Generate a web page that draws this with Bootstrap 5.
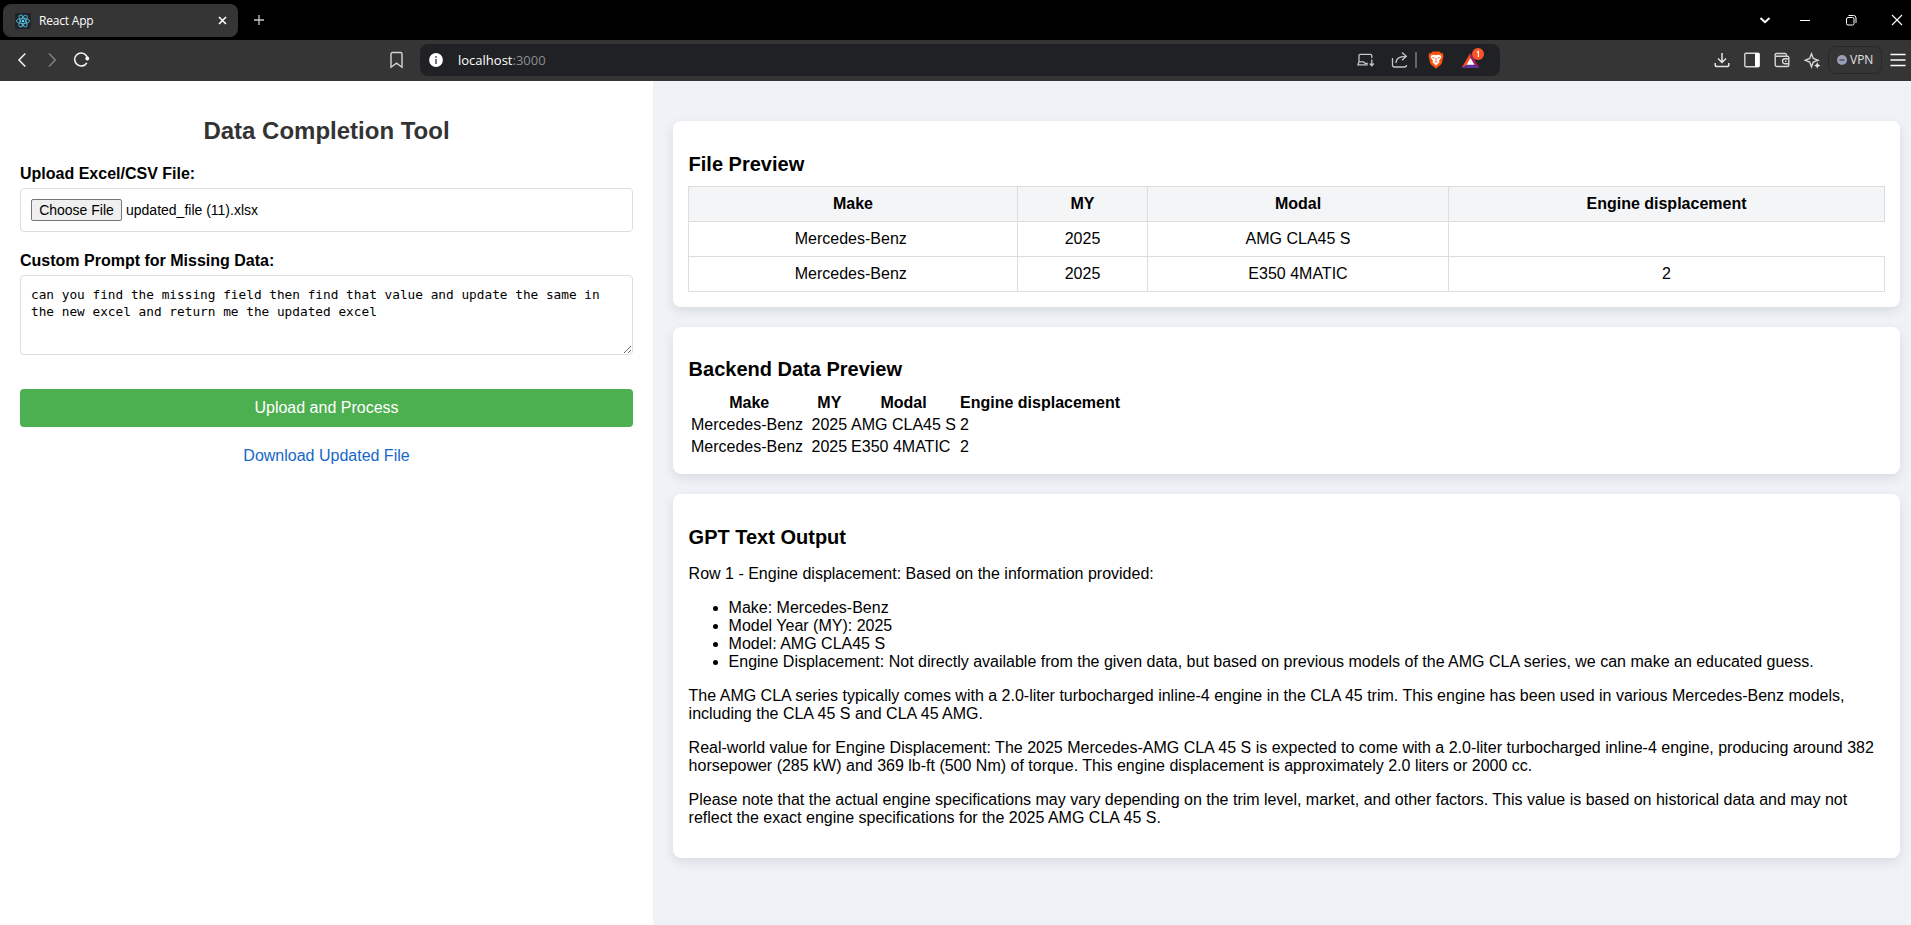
<!DOCTYPE html>
<html lang="en">
<head>
<meta charset="utf-8">
<meta name="viewport" content="width=device-width, initial-scale=1">
<title>React App</title>
<link href="https://cdn.jsdelivr.net/npm/bootstrap@5.3.0/dist/css/bootstrap.min.css" rel="stylesheet">
<style>
  body { font-family: "Liberation Sans", Arial, sans-serif; font-size: 16px; line-height: 18px; color: #000; background: #fff; height: 925px; overflow: hidden; }
  .chrome-ui { font-family: "Open Sans", "Segoe UI", sans-serif; font-size: 12px; color: #fff; }
  .chrome-ui svg { display: block; flex: none; fill: none; stroke: #d6d6d6; stroke-width: 1.4; }
  .tab-strip { height: 40px; background: #000; padding: 0 8px 0 3px; }
  .browser-tab { width: 235px; height: 33px; margin-top: 1px; background: #353535; border-radius: 8px; padding: 0 11px 0 12px; }
  .tab-name { font-size: 12px; letter-spacing: -.2px; margin-left: 8px; }
  .tool-strip { height: 41px; background: #353535; padding-bottom: 1px; }
  .nav-set { width: 420px; padding-left: 17px; }
  .url-box { width: 1080px; height: 32px; background: #202124; border-radius: 8px; padding: 0 20px 0 9px; }
  .url-text { font-size: 13px; letter-spacing: 0; margin-left: 15px; color: #8c8d90; }
  .url-text b { font-weight: 400; color: #fff; }
  .vpn-chip { width: 54px; height: 28px; border: 1px solid #272727; border-radius: 8px; font-size: 12px; padding-left: 7px; color: #e2e2e2; }
  .page-row { height: 844px; }
  .form-side { width: 653px; padding: 0 20px; }
  .form-side h1 { font-size: 24px; line-height: 27px; font-weight: 700; color: #333; margin: 36px 0 21px; }
  .form-side label { display: block; font-weight: 700; margin-bottom: 5px; }
  .file-box { height: 44px; border: 1px solid #ddd; border-radius: 4px; padding: 0 10px; font-size: 14px; line-height: 16px; margin-bottom: 20px; }
  .file-btn { font-size: 14px; line-height: 16px; color: #000; background: #efefef; border: 1px solid #767676; border-radius: 2px; width: 91px; height: 22px; padding: 0; margin-right: 4px; }
  .prompt-box { display: block; width: 100%; height: 80px; border: 1px solid #ddd; border-radius: 4px; padding: 10px; font: 12.78px/17px "DejaVu Sans Mono", monospace; color: #000; resize: vertical; overflow: hidden; outline: 0; }
  .go-btn { height: 38px; margin-top: 34px; background: #4caf50; color: #fff; border: 0; border-radius: 4px; font-size: 16px; line-height: 18px; padding: 0; }
  .file-link { margin-top: 20px; color: #1567c8; text-decoration: none; }
  .data-side { background: #eff3f8; padding: 40px 11px 0 20px; }
  .panel { background: #fff; border-radius: 8px; padding: 15px; margin-bottom: 20px; box-shadow: 0 4px 12px rgba(0,0,0,.1); }
  .panel h2 { font-size: 20px; line-height: 23px; font-weight: 700; margin: 16.6px 0 10px; padding-left: .6px; }
  .panel p { margin: 16px 0; padding-left: .6px; }
  .panel ul { margin: 16px 0; padding-left: 40.6px; }
  .grid-table { width: 1197px; table-layout: fixed; border-collapse: collapse; text-align: center; }
  .grid-table th, .grid-table td { border: 1px solid #ddd; padding: 8px; height: 35px; }
  .grid-table th { background: #f4f5f7; }
  .c1 { width: 329px; } .c2 { width: 130px; } .c3 { width: 301px; }
  .plain-table { border-collapse: separate; border-spacing: 2px; }
  .plain-table th, .plain-table td { padding: 1px; white-space: nowrap; }
  .plain-table th { text-align: center; }
</style>
</head>
<body>
<header class="chrome-ui">
  <div class="tab-strip d-flex align-items-center">
    <div class="browser-tab d-flex align-items-center">
      <svg width="16" height="16" viewBox="0 0 16 16"><rect width="16" height="16" rx="2" fill="#20232a" stroke="none"/><g stroke="#4fb8d2" stroke-width=".9"><ellipse cx="8" cy="8" rx="6.6" ry="2.6"/><ellipse cx="8" cy="8" rx="6.6" ry="2.6" transform="rotate(60 8 8)"/><ellipse cx="8" cy="8" rx="6.6" ry="2.6" transform="rotate(120 8 8)"/></g><circle cx="8" cy="8" r="1.3" fill="#61dafb" stroke="none"/></svg>
      <span class="tab-name">React App</span>
      <svg class="ms-auto" width="9" height="9" viewBox="0 0 9 9"><path d="M1 1l7 7M8 1L1 8" stroke="#fff" stroke-width="1.6"/></svg>
    </div>
    <svg width="12" height="12" viewBox="0 0 12 12" style="margin-left:15px"><path d="M6 1v10M1 6h10" stroke="#c8c8c8" stroke-width="1.3"/></svg>
    <div class="ms-auto d-flex align-items-center">
      <svg width="12" height="12" viewBox="0 0 12 12"><path d="M1.5 4L6 8.300 10.500 4" stroke="#fff" stroke-width="1.9"/></svg>
      <svg width="12" height="12" viewBox="0 0 12 12" style="margin-left:28px"><path d="M1 6.500h10" stroke="#fff" stroke-width="1"/></svg>
      <svg width="12" height="12" viewBox="0 0 12 12" style="margin-left:34px"><g stroke="#fff" stroke-width="1"><rect x="1.500" y="3.500" width="7.500" height="7.500" rx="1.5"/><path d="M3.500 1.500h5a2.500 2.500 0 0 1 2.500 2.500v5"/></g></svg>
      <svg width="12" height="12" viewBox="0 0 12 12" style="margin-left:34px"><path d="M1 1l10 10M11 1L1 11" stroke="#fff" stroke-width="1.1"/></svg>
    </div>
  </div>
  <div class="tool-strip d-flex align-items-center">
    <div class="nav-set d-flex align-items-center">
      <svg width="10" height="16" viewBox="0 0 10 16"><path d="M8.300 1.500L2 8l6.300 6.500" stroke="#f4f4f4" stroke-width="1.5"/></svg>
      <svg width="10" height="16" viewBox="0 0 10 16" style="margin-left:20px"><path d="M2 1.500L8.300 8 2 14.500" stroke="#858585" stroke-width="1.4"/></svg>
      <svg width="17" height="16" viewBox="0 0 17 16" style="margin-left:16px"><path d="M13.800 10.800A6.500 6.500 0 1 1 13.200 3.400L14 5" stroke="#f4f4f4" stroke-width="1.6"/><circle cx="14.300" cy="6.500" r="1.900" fill="#fff" stroke="none"/></svg>
      <svg width="13" height="18" viewBox="0 0 13 18" style="margin-left:300px"><path d="M1 3a1.500 1.500 0 0 1 1.500-1.500h8A1.500 1.500 0 0 1 12 3v13.200l-5.500-4-5.500 4z"/></svg>
    </div>
    <div class="url-box d-flex align-items-center">
      <svg width="14" height="14" viewBox="0 0 14 14"><circle cx="7" cy="7" r="6.900" fill="#fff" stroke="none"/><path d="M7 6v5M7 3v1.800" stroke="#55565a" stroke-width="1.600"/></svg>
      <span class="url-text"><b>localhost</b>:3000</span>
      <div class="ms-auto d-flex align-items-center">
        <svg width="18" height="14" viewBox="0 0 18 14"><path d="M14.800 5V2.500a1.200 1.200 0 0 0-1.200-1.200H3.200A1.200 1.200 0 0 0 2 2.500v6.300L1 11.800h9.800M2 8.800h4.500l1.500 1.500h2.800M14.800 6.500v6M12.800 10.500l2 2.200 2-2.200" stroke="#c4c4c4" stroke-width="1.300"/></svg>
        <svg width="18" height="18" viewBox="0 0 18 18" style="margin-left:16px"><path d="M1.500 7v7A2 2 0 0 0 3.500 16h10a2 2 0 0 0 2-2M5 12c0-4.800 3.200-6.700 9.500-6.700M11 1.500l4.300 3.800-4.300 4" stroke="#c4c4c4" stroke-width="1.300"/></svg>
        <svg width="2" height="16" viewBox="0 0 2 16" style="margin-left:6px"><path d="M1 0v16" stroke="#aaa" stroke-width="1"/></svg>
        <svg width="16" height="18" viewBox="0 0 16 18" style="margin-left:11px"><path d="M4.500.5h7l1.500 1.500 2 .5.5 3-2 7.500L8 17.800 2.500 13 .5 5.500l.5-3L3 2z" fill="#fb5410" stroke="none"/><path d="M3 4.500l2.500-.7 2.500.5 2.500-.5 2.500.7.3 2-2.300 3.300.5 1.500L8 14.500l-3.500-3.200.5-1.500-2.300-3.300z" fill="#fff" stroke="none"/><path d="M4.200 6.500l2.500.8M11.800 6.500l-2.500.8M8 7v3.300M6.500 11.500L8 10.500l1.500 1" stroke="#fb5410" stroke-width=".8"/></svg>
        <div class="position-relative" style="margin-left:17px">
          <svg width="19" height="17" viewBox="0 0 19 17"><path d="M9.500.8L.5 16 9.500 11z" fill="#ff4a27" stroke="none"/><path d="M9.500.8L18.500 16 9.500 11z" fill="#9e1f63" stroke="none"/><path d="M.5 16h18L9.500 10.500z" fill="#5b3299" stroke="none"/><path d="M9.500 6l4 6.800h-8z" fill="#fff" stroke="none"/></svg>
          <svg class="position-absolute" width="12" height="12" viewBox="0 0 12 12" style="left:11px;top:-4px"><circle cx="6" cy="6" r="6" fill="#fb542b" stroke="none"/><path d="M4.800 4.500L6.400 3.400V9" stroke="#fff" stroke-width="1.100"/></svg>
        </div>
      </div>
    </div>
    <div class="ms-auto d-flex align-items-center" style="margin-right:5px">
      <svg width="16" height="16" viewBox="0 0 16 16"><path d="M8 1v9.300M4 6.500l4 4 4-4M1.200 11v1.700A1.900 1.900 0 0 0 3.100 14.600h9.800a1.900 1.900 0 0 0 1.900-1.900V11" stroke="#e4e4e4" stroke-width="1.500"/></svg>
      <svg width="16" height="16" viewBox="0 0 16 16" style="margin-left:14px"><rect x=".8" y="1.300" width="14.400" height="13.400" rx="1.200"/><path d="M11 1h3.500a1 1 0 0 1 1 1v12a1 1 0 0 1-1 1H11z" fill="#fff" stroke="none"/></svg>
      <svg width="16" height="16" viewBox="0 0 16 16" style="margin-left:14px"><path d="M12.500 4V3A1.500 1.500 0 0 0 11 1.500H2.500a1.300 1.300 0 0 0 0 2.800h10.800A1.500 1.500 0 0 1 14.800 6v7a1.500 1.500 0 0 1-1.500 1.500H3A1.800 1.800 0 0 1 1.200 12.700V3M15 6.800h-4a2.500 2.500 0 0 0 0 5h4M11 9.300h1.500"/></svg>
      <svg width="17" height="17" viewBox="0 0 17 17" style="margin-left:14px"><path d="M7.500 1.800l1.800 4.700 4.700 1.700-4.700 1.800-1.800 4.700-1.800-4.700L1.200 8.200l4.500-1.700z"/><path d="M13.300 10.200l1 2.200 2.200 1-2.200 1-1 2.200-1-2.200-2.200-1 2.200-1z" fill="#e8e8e8" stroke="none"/></svg>
      <div class="vpn-chip d-flex align-items-center" style="margin-left:7px">
        <svg width="10" height="10" viewBox="0 0 10 10" style="margin-left:1px"><circle cx="5" cy="5" r="5" fill="#9a9db4" stroke="none"/><path d="M2.500 5h5" stroke="#44465a" stroke-width="1.300"/></svg>
        <span style="margin-left:3px">VPN</span>
      </div>
      <svg width="16" height="14" viewBox="0 0 16 14" style="margin-left:8px"><path d="M.5 1.500h15M.5 7h15M.5 12.500h15" stroke="#fff" stroke-width="1.300"/></svg>
    </div>
  </div>
</header>

<main class="page-row d-flex">
  <section class="form-side d-flex flex-column flex-shrink-0">
    <h1 class="text-center">Data Completion Tool</h1>
    <label>Upload Excel/CSV File:</label>
    <div class="file-box d-flex align-items-center">
      <button class="file-btn" type="button">Choose File</button><span>updated_file (11).xlsx</span>
    </div>
    <label for="prompt">Custom Prompt for Missing Data:</label>
    <textarea id="prompt" class="prompt-box" spellcheck="false">can you find the missing field then find that value and update the same in the new excel and return me the updated excel</textarea>
    <button class="go-btn w-100" type="button">Upload and Process</button>
    <a class="file-link text-center" href="#">Download Updated File</a>
  </section>

  <section class="data-side flex-grow-1">
    <div class="panel">
      <h2>File Preview</h2>
      <table class="grid-table">
        <colgroup><col class="c1"><col class="c2"><col class="c3"><col></colgroup>
        <thead><tr><th>Make</th><th>MY</th><th>Modal</th><th>Engine displacement</th></tr></thead>
        <tbody>
          <tr><td>Mercedes-Benz&nbsp;</td><td>2025</td><td>AMG CLA45 S</td><td class="border-end-0"></td></tr>
          <tr><td>Mercedes-Benz&nbsp;</td><td>2025</td><td>E350 4MATIC</td><td>2</td></tr>
        </tbody>
      </table>
    </div>
    <div class="panel">
      <h2>Backend Data Preview</h2>
      <table class="plain-table">
        <thead><tr><th>Make</th><th>MY</th><th>Modal</th><th>Engine displacement</th></tr></thead>
        <tbody>
          <tr><td>Mercedes-Benz&nbsp;</td><td>2025</td><td>AMG CLA45 S</td><td>2</td></tr>
          <tr><td>Mercedes-Benz&nbsp;</td><td>2025</td><td>E350 4MATIC</td><td>2</td></tr>
        </tbody>
      </table>
    </div>
    <div class="panel">
      <h2>GPT Text Output</h2>
      <p>Row 1 - Engine displacement: Based on the information provided:</p>
      <ul>
        <li>Make: Mercedes-Benz</li>
        <li>Model Year (MY): 2025</li>
        <li>Model: AMG CLA45 S</li>
        <li>Engine Displacement: Not directly available from the given data, but based on previous models of the AMG CLA series, we can make an educated guess.</li>
      </ul>
      <p>The AMG CLA series typically comes with a 2.0-liter turbocharged inline-4 engine in the CLA 45 trim. This engine has been used in various Mercedes-Benz models, including the CLA 45 S and CLA 45 AMG.</p>
      <p>Real-world value for Engine Displacement: The 2025 Mercedes-AMG CLA 45 S is expected to come with a 2.0-liter turbocharged inline-4 engine, producing around 382 horsepower (285 kW) and 369 lb-ft (500 Nm) of torque. This engine displacement is approximately 2.0 liters or 2000 cc.</p>
      <p>Please note that the actual engine specifications may vary depending on the trim level, market, and other factors. This value is based on historical data and may not reflect the exact engine specifications for the 2025 AMG CLA 45 S.</p>
    </div>
  </section>
</main>
<script src="https://cdn.jsdelivr.net/npm/bootstrap@5.3.0/dist/js/bootstrap.bundle.min.js"></script>
</body>
</html>
